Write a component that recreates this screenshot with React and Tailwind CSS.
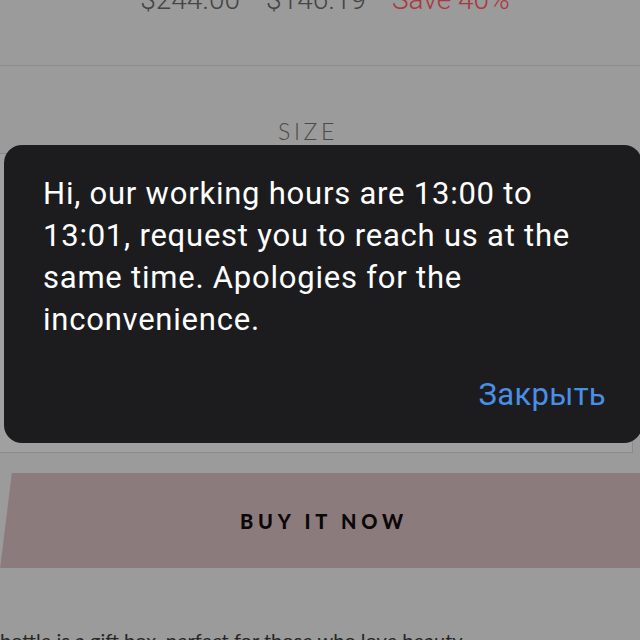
import React from 'react';

const ProductPage = () => {
  return (
    <div className="flex flex-col" style={{ fontFamily: 'Roboto, "Liberation Sans", sans-serif' }}>
      {/* Prices (scrolled mostly off top) */}
      <div className="-mt-[14px] flex h-[28px] items-end justify-center gap-[26px] pl-[10px] text-[28px] leading-none font-light">
        <span className="text-[#454545]">$244.00</span>
        <span className="text-[#454545]">$146.19</span>
        <span className="text-[#a8393c]">Save 40%</span>
      </div>

      <div className="mt-[51px] h-px bg-[#8c8c8c]" />

      <div
        className="mt-[54px] pr-[24px] text-center text-[23px] leading-none tracking-[0.16em] text-[#4b4b48] font-light"
        style={{ fontFamily: 'Lato, "Liberation Sans", sans-serif' }}
      >
        SIZE
      </div>

      {/* Size selector box, mostly hidden under the dialog */}
      <div className="mt-[10px] mr-[7px] -ml-px h-[300px] border border-[#8a8a8a] bg-[#a0a0a0]" />

      {/* Buy button */}
      <div className="mt-[20px] pl-[6px]">
        <div className="flex h-[95px] w-[640px] -skew-x-7 items-center justify-center bg-[#8b7b7c]">
          <span
            className="skew-x-7 pr-[4px] text-[20px] font-black tracking-[0.24em] text-[#0c0808]"
            style={{ fontFamily: 'Lato, "Liberation Sans", sans-serif' }}
          >
            BUY IT NOW
          </span>
        </div>
      </div>

      <div
        className="mt-[62px] whitespace-nowrap text-[20px] leading-none text-[#262626]"
        style={{ fontFamily: 'Lato, "Liberation Sans", sans-serif' }}
      >
        bottle is a gift box, perfect for those who love beauty
      </div>
    </div>
  );
};

const AlertDialog = () => {
  return (
    <div
      className="absolute left-[4px] top-[145px] flex h-[298px] w-[638px] flex-col rounded-[18px] bg-[#1c1c1e] pl-[39px] pr-[36px] pt-[28px]"
      style={{ fontFamily: 'Roboto, "Liberation Sans", sans-serif' }}
    >
      <p className="text-[31px] leading-[42px] tracking-[0.025em] text-white">
        Hi, our working hours are 13:00 to 13:01, request you to reach us at the same time. Apologies for the inconvenience.
      </p>
      <div className="mt-[38px] flex justify-end">
        <button className="text-[31px] leading-none tracking-[0.01em] text-[#4a8fe6]">Закрыть</button>
      </div>
    </div>
  );
};

export default function App() {
  return (
    <div className="relative h-[640px] w-[640px] overflow-hidden bg-[#9b9b9b]">
      <ProductPage />
      <AlertDialog />
    </div>
  );
}
